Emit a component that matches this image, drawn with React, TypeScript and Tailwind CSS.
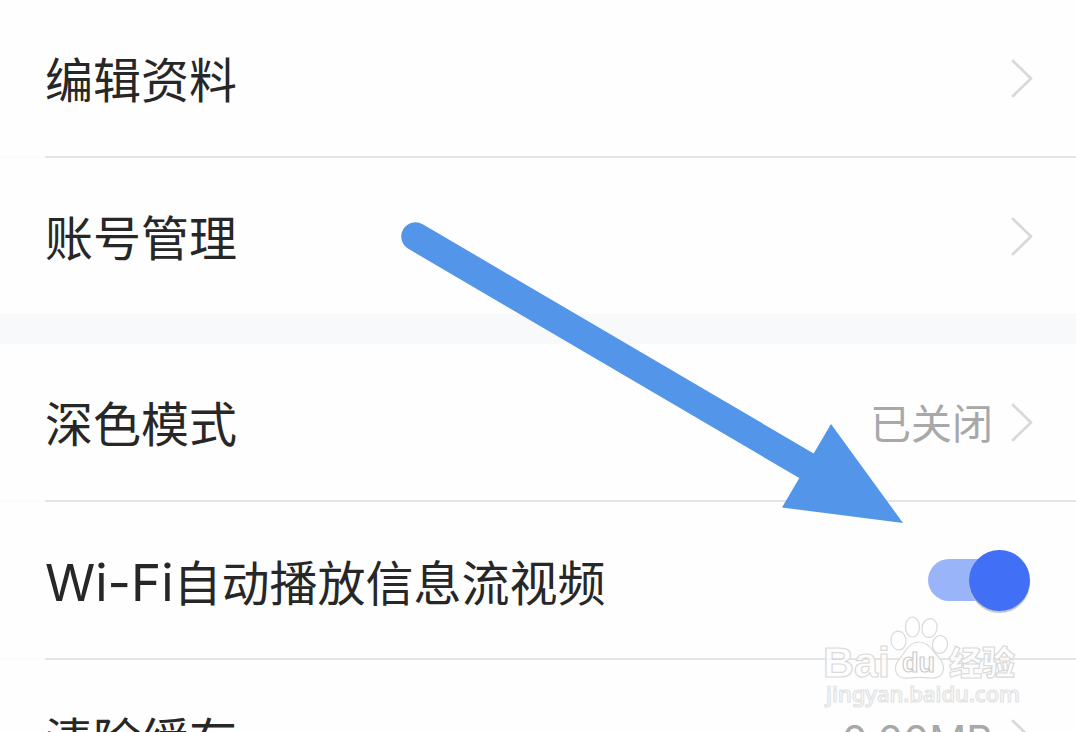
import React from "react"

const Chevron = () => (
    <svg className="h-10 w-6 shrink-0" viewBox="0 0 24 40" fill="none" stroke="#d9d9d9" strokeWidth="2.8" strokeLinecap="round" strokeLinejoin="round">
        <path d="M4 3 L22 20.5 L4 38" />
    </svg>
)

interface LinkRowProps {
    title: string
    value?: string
}
const LinkRow = ({ title, value }: LinkRowProps) => (
    <li>
        <a href="#" className="flex h-[156px] items-center pr-[43px] pl-[45px]">
            <span className="flex-1 pt-1.5 text-[48px] leading-[72px]">{title}</span>
            {value && <span className="mr-4 pt-1 text-[41px] leading-[64px] text-[#a8a8a8]">{value}</span>}
            <Chevron />
        </a>
    </li>
)

const Divider = () => (
    <li aria-hidden="true" className="flex h-0.5">
        <span className="w-[45px] bg-[#fafafa]"></span>
        <span className="flex-1 bg-[#e4e4e4]"></span>
    </li>
)

const Arrow = () => (
    <svg className="pointer-events-none absolute top-[210px] left-[390px]" width="520" height="320" viewBox="390 210 520 320" fill="#5396e9">
        <path d="M415.5 236.5 L812 469" stroke="#5396e9" strokeWidth="28.5" strokeLinecap="round" />
        <path d="M831 424 L903 523 L782 507.5 Z" />
    </svg>
)

const Watermark = () => (
    <svg className="pointer-events-none absolute top-[610px] right-[50px]" width="206" height="104" viewBox="820 610 206 104" fill="#ffffff" fillOpacity="0.75" stroke="#dadada" strokeWidth="1.2">
        <ellipse cx="898.5" cy="640.5" rx="7.5" ry="9.5" transform="rotate(-8 898.5 640.5)" />
        <ellipse cx="912.5" cy="627" rx="7" ry="10" />
        <ellipse cx="929.5" cy="628" rx="7.5" ry="9.5" transform="rotate(12 929.5 628)" />
        <ellipse cx="940" cy="644.5" rx="7.5" ry="9" transform="rotate(8 940 644.5)" />
        <path d="M919 642 C926 642 930 646 934 652 C938 657 944 661 943.5 669 C943 676 937 678.5 930 678 C922 677 917 677 909 678 C901 679 895.5 676 895.5 668 C895.5 661 900 659 904 653 C908 646 912 642 919 642 Z" />
        <text x="823" y="677" fontSize="43" fontWeight="700" fontFamily="Liberation Sans, sans-serif">Bai</text>
        <text x="902" y="672" fontSize="27" fontWeight="700" fontFamily="Liberation Sans, sans-serif" stroke="#cccccc">du</text>
        <text x="949" y="675" fontSize="33" fontWeight="900" fontFamily="Noto Sans CJK SC, sans-serif">经验</text>
        <text x="826" y="702" fontSize="22" fontWeight="500" fontFamily="Noto Sans, sans-serif" stroke="#e2e2e2">jingyan.baidu.com</text>
    </svg>
)

const App = () => {
    return (
        <main className="relative h-screen overflow-hidden bg-[#fefefe] font-[Inter,'Noto_Sans_CJK_SC',sans-serif] text-[#272727]">
            <ul className="border-b-[30px] border-[#f8f9fb]">
                <LinkRow title="编辑资料" />
                <Divider />
                <LinkRow title="账号管理" />
            </ul>
            <ul>
                <LinkRow title="深色模式" value="已关闭" />
                <Divider />
                <li className="flex h-[156px] items-center pr-[46px] pl-[45px]">
                    <label htmlFor="autoplay" className="flex-1 pt-1.5 text-[48px] leading-[72px]">
                        <span className="text-[51px]">Wi-Fi</span>自动播放信息流视频
                    </label>
                    <input
                        id="autoplay"
                        type="checkbox"
                        role="switch"
                        defaultChecked
                        className="flex h-[60px] w-[102px] appearance-none items-center before:h-[42px] before:w-[92px] before:rounded-full before:bg-[#9ab4f9] after:-ml-[51px] after:size-[61px] after:shrink-0 after:rounded-full after:bg-[#4170f6] after:shadow-[0_2px_1px_#c4c4c4]"
                    />
                </li>
                <Divider />
                <LinkRow title="清除缓存" value="0.00MB" />
            </ul>
            <Arrow />
            <Watermark />
        </main>
    )
}

export default App
